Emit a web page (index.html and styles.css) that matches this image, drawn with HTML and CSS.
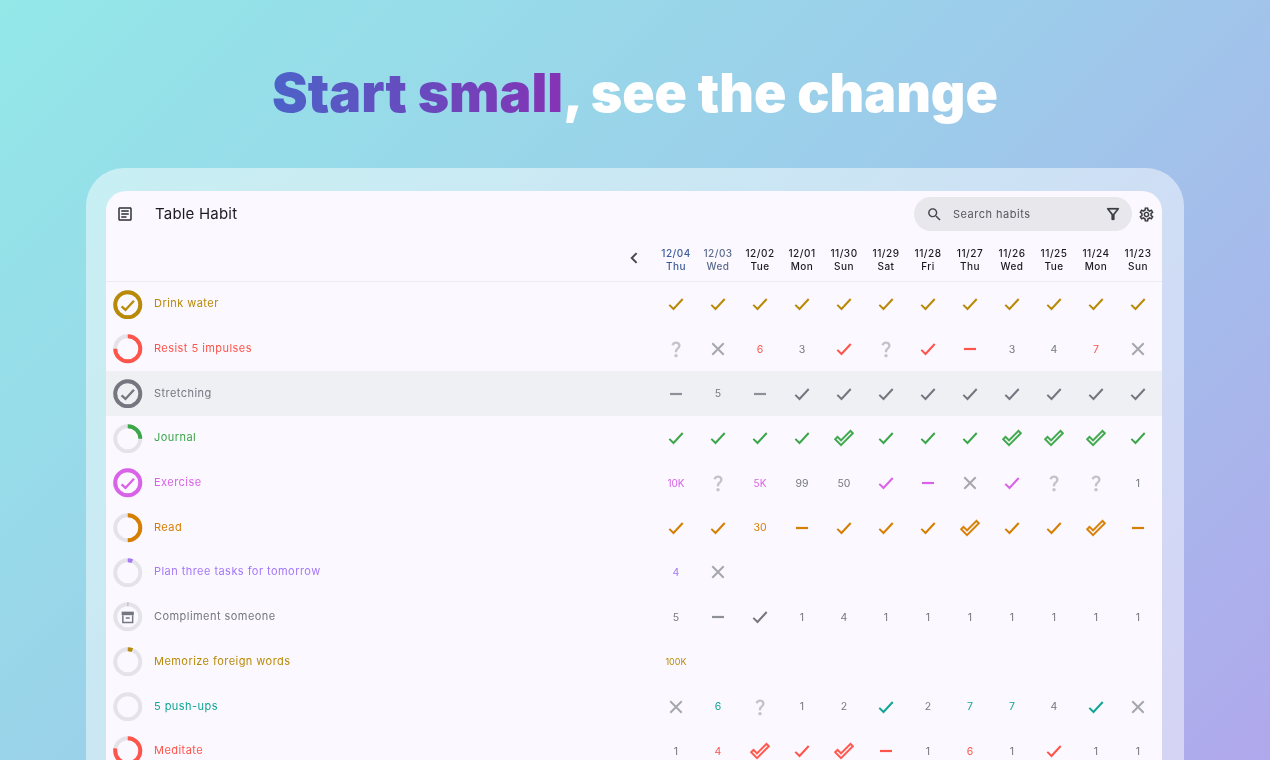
FILE: index.html
```html
<!DOCTYPE html>
<html lang="en">
<head>
    <meta charset="UTF-8">
    <meta name="viewport" content="width=device-width, initial-scale=1.0">
    <title>Table Habit</title>
    <link rel="stylesheet" href="styles.css">
</head>
<body>
    <svg class="defs" aria-hidden="true">
        <symbol id="check" viewBox="0 0 24 24"><path d="M5.300 12.900l4.200 4.100 9.200-10" fill="none" stroke="currentColor" stroke-width="2"/></symbol>
        <symbol id="dbl" viewBox="0 0 24 24"><path d="M19.770 4.930l1.400 1.400L8.430 19.070l-5.600-5.600 1.400-1.400 4.200 4.200L19.770 4.930m0-2.830L8.430 13.440l-4.200-4.200L0 13.470l8.430 8.430L24 6.330 19.770 2.100z" fill="currentColor" stroke="currentColor" stroke-width="0.500"/></symbol>
        <symbol id="dash" viewBox="0 0 24 24"><path d="M6 12h12" fill="none" stroke="currentColor" stroke-width="2.200"/></symbol>
        <symbol id="cross" viewBox="0 0 24 24"><path d="M6.300 6.300l11.400 11.400M17.700 6.300L6.300 17.700" fill="none" stroke="currentColor" stroke-width="2"/></symbol>
        <symbol id="ask" viewBox="0 0 24 24"><path d="M11.070 12.850c.77-1.390 2.250-2.210 3.110-3.440.91-1.290.4-3.700-2.180-3.700-1.690 0-2.520 1.280-2.870 2.340L6.540 6.960C7.250 4.830 9.180 3 11.990 3c2.350 0 3.960 1.070 4.780 2.410.7 1.150 1.110 3.300.03 4.900-1.200 1.770-2.350 2.310-2.970 3.450-.25.46-.35.76-.35 2.240h-2.890c-.01-.78-.13-2.050.48-3.150zM14 20c0 1.100-.9 2-2 2s-2-.9-2-2 .9-2 2-2 2 .9 2 2z" fill="currentColor"/></symbol>
        <symbol id="ring" viewBox="0 0 30 30"><circle cx="15" cy="15" r="12.750" fill="none" stroke="#e4e4e8" stroke-width="4"/></symbol>
    </svg>

    <h1 class="headline"><span class="accent">Start small</span>, see the change</h1>

    <div class="frame">
        <div class="app">
            <div class="topbar">
                <svg class="icon-notes" viewBox="0 0 24 24"><path d="M19 5v14H5V5h14m0-2H5c-1.100 0-2 .9-2 2v14c0 1.100.9 2 2 2h14c1.100 0 2-.9 2-2V5c0-1.100-.9-2-2-2zM14 17H7v-2h7v2zm3-4H7v-2h10v2zm0-4H7V7h10v2z"/></svg>
                <div class="title">Table Habit</div>
                <div class="search">
                    <svg class="icon-search" viewBox="0 0 24 24"><path d="M15.500 14h-.79l-.28-.27C15.410 12.590 16 11.110 16 9.500 16 5.910 13.090 3 9.500 3S3 5.910 3 9.500 5.910 16 9.500 16c1.610 0 3.090-.59 4.230-1.570l.27.28v.79l5 4.990L20.490 19l-4.990-5zm-6 0C7.010 14 5 11.990 5 9.500S7.010 5 9.500 5 14 7.010 14 9.500 11.990 14 9.500 14z"/></svg>
                    <span class="search-text">Search habits</span>
                    <svg class="icon-filter" viewBox="0 0 24 24"><path d="M7 6h10l-5.010 6.300L7 6zm-2.750-.39C6.270 8.200 10 13 10 13v6c0 .55.45 1 1 1h2c.55 0 1-.45 1-1v-6s3.720-4.800 5.740-7.390c.51-.66.04-1.610-.79-1.610H5.040c-.83 0-1.300.95-.79 1.610z"/></svg>
                </div>
                <svg class="icon-gear" viewBox="0 0 24 24"><path d="M19.430 12.980c.04-.32.07-.64.07-.98 0-.34-.03-.66-.07-.98l2.110-1.650c.19-.15.24-.42.12-.64l-2-3.460c-.09-.16-.26-.25-.44-.25-.06 0-.12.01-.17.03l-2.490 1c-.52-.4-1.080-.73-1.690-.98l-.38-2.650C14.460 2.180 14.250 2 14 2h-4c-.25 0-.46.18-.49.42l-.38 2.650c-.61.25-1.170.59-1.690.98l-2.490-1c-.06-.02-.12-.03-.18-.03-.17 0-.34.09-.43.25l-2 3.460c-.13.22-.07.49.12.64l2.110 1.650c-.04.32-.07.65-.07.98 0 .33.03.66.07.98l-2.110 1.650c-.19.15-.24.42-.12.64l2 3.460c.09.16.26.25.44.25.06 0 .12-.01.17-.03l2.490-1c.52.4 1.080.73 1.690.98l.38 2.650c.03.24.24.42.49.42h4c.25 0 .46-.18.49-.42l.38-2.650c.61-.25 1.170-.59 1.690-.98l2.490 1c.06.02.12.03.18.03.17 0 .34-.09.43-.25l2-3.460c.12-.22.07-.49-.12-.64l-2.110-1.650zm-1.980-1.710c.04.31.05.52.05.73 0 .21-.02.43-.05.73l-.14 1.130.89.7 1.080.84-.7 1.210-1.270-.51-1.040-.42-.9.68c-.43.32-.84.56-1.250.73l-1.060.43-.16 1.130-.2 1.350h-1.400l-.19-1.350-.16-1.130-1.060-.43c-.43-.18-.83-.41-1.230-.71l-.91-.7-1.060.43-1.270.51-.7-1.210 1.080-.84.89-.7-.14-1.130c-.03-.31-.05-.54-.05-.74s.02-.43.05-.73l.14-1.130-.89-.7-1.080-.84.7-1.210 1.270.51 1.040.42.9-.68c.43-.32.84-.56 1.250-.73l1.060-.43.16-1.130.2-1.350h1.390l.19 1.350.16 1.130 1.060.43c.43.18.83.41 1.230.71l.91.7 1.060-.43 1.270-.51.7 1.210-1.070.85-.89.7.14 1.130zM12 8c-2.210 0-4 1.790-4 4s1.790 4 4 4 4-1.790 4-4-1.790-4-4-4zm0 6c-1.100 0-2-.9-2-2s.9-2 2-2 2 .9 2 2-.9 2-2 2z"/></svg>
            </div>

            <div class="dates">
                <div class="prev"><svg class="icon-prev" viewBox="0 0 24 24"><path d="M15.500 5.500L9 12l6.500 6.500" fill="none" stroke="currentColor" stroke-width="2.600"/></svg></div>
                <div class="date today"><span>12/04</span><span>Thu</span></div>
                <div class="date past"><span>12/03</span><span>Wed</span></div>
                <div class="date"><span>12/02</span><span>Tue</span></div>
                <div class="date"><span>12/01</span><span>Mon</span></div>
                <div class="date"><span>11/30</span><span>Sun</span></div>
                <div class="date"><span>11/29</span><span>Sat</span></div>
                <div class="date"><span>11/28</span><span>Fri</span></div>
                <div class="date"><span>11/27</span><span>Thu</span></div>
                <div class="date"><span>11/26</span><span>Wed</span></div>
                <div class="date"><span>11/25</span><span>Tue</span></div>
                <div class="date"><span>11/24</span><span>Mon</span></div>
                <div class="date"><span>11/23</span><span>Sun</span></div>
            </div>

            <div class="row gold">
                <div class="habit">
                    <svg class="ring" viewBox="0 0 30 30"><use href="#ring"/><circle class="arc" cx="15" cy="15" r="12.750" pathLength="100" stroke-dasharray="100 100"/><path class="tick" d="M8.700 16.700l4 3.600 8.600-9.300"/></svg>
                    <span class="name">Drink water</span>
                </div>
                <span class="cell"><svg><use href="#check"/></svg></span>
                <span class="cell"><svg><use href="#check"/></svg></span>
                <span class="cell"><svg><use href="#check"/></svg></span>
                <span class="cell"><svg><use href="#check"/></svg></span>
                <span class="cell"><svg><use href="#check"/></svg></span>
                <span class="cell"><svg><use href="#check"/></svg></span>
                <span class="cell"><svg><use href="#check"/></svg></span>
                <span class="cell"><svg><use href="#check"/></svg></span>
                <span class="cell"><svg><use href="#check"/></svg></span>
                <span class="cell"><svg><use href="#check"/></svg></span>
                <span class="cell"><svg><use href="#check"/></svg></span>
                <span class="cell"><svg><use href="#check"/></svg></span>
            </div>

            <div class="row red">
                <div class="habit">
                    <svg class="ring" viewBox="0 0 30 30"><use href="#ring"/><circle class="arc" cx="15" cy="15" r="12.750" pathLength="100" stroke-dasharray="75 100"/></svg>
                    <span class="name">Resist 5 impulses</span>
                </div>
                <span class="cell ask"><svg><use href="#ask"/></svg></span>
                <span class="cell off"><svg><use href="#cross"/></svg></span>
                <span class="cell on">6</span>
                <span class="cell num">3</span>
                <span class="cell"><svg><use href="#check"/></svg></span>
                <span class="cell ask"><svg><use href="#ask"/></svg></span>
                <span class="cell"><svg><use href="#check"/></svg></span>
                <span class="cell"><svg><use href="#dash"/></svg></span>
                <span class="cell num">3</span>
                <span class="cell num">4</span>
                <span class="cell on">7</span>
                <span class="cell off"><svg><use href="#cross"/></svg></span>
            </div>

            <div class="row gray selected">
                <div class="habit">
                    <svg class="ring" viewBox="0 0 30 30"><use href="#ring"/><circle class="arc" cx="15" cy="15" r="12.750" pathLength="100" stroke-dasharray="100 100"/><path class="tick" d="M8.700 16.700l4 3.600 8.600-9.300"/></svg>
                    <span class="name">Stretching</span>
                </div>
                <span class="cell off-dash"><svg><use href="#dash"/></svg></span>
                <span class="cell num">5</span>
                <span class="cell off-dash"><svg><use href="#dash"/></svg></span>
                <span class="cell"><svg><use href="#check"/></svg></span>
                <span class="cell"><svg><use href="#check"/></svg></span>
                <span class="cell"><svg><use href="#check"/></svg></span>
                <span class="cell"><svg><use href="#check"/></svg></span>
                <span class="cell"><svg><use href="#check"/></svg></span>
                <span class="cell"><svg><use href="#check"/></svg></span>
                <span class="cell"><svg><use href="#check"/></svg></span>
                <span class="cell"><svg><use href="#check"/></svg></span>
                <span class="cell"><svg><use href="#check"/></svg></span>
            </div>

            <div class="row green">
                <div class="habit">
                    <svg class="ring" viewBox="0 0 30 30"><use href="#ring"/><circle class="arc" cx="15" cy="15" r="12.750" pathLength="100" stroke-dasharray="25 100"/></svg>
                    <span class="name">Journal</span>
                </div>
                <span class="cell"><svg><use href="#check"/></svg></span>
                <span class="cell"><svg><use href="#check"/></svg></span>
                <span class="cell"><svg><use href="#check"/></svg></span>
                <span class="cell"><svg><use href="#check"/></svg></span>
                <span class="cell double"><svg><use href="#dbl"/></svg></span>
                <span class="cell"><svg><use href="#check"/></svg></span>
                <span class="cell"><svg><use href="#check"/></svg></span>
                <span class="cell"><svg><use href="#check"/></svg></span>
                <span class="cell double"><svg><use href="#dbl"/></svg></span>
                <span class="cell double"><svg><use href="#dbl"/></svg></span>
                <span class="cell double"><svg><use href="#dbl"/></svg></span>
                <span class="cell"><svg><use href="#check"/></svg></span>
            </div>

            <div class="row pink">
                <div class="habit">
                    <svg class="ring" viewBox="0 0 30 30"><use href="#ring"/><circle class="arc" cx="15" cy="15" r="12.750" pathLength="100" stroke-dasharray="100 100"/><path class="tick" d="M8.700 16.700l4 3.600 8.600-9.300"/></svg>
                    <span class="name">Exercise</span>
                </div>
                <span class="cell on small">10K</span>
                <span class="cell ask"><svg><use href="#ask"/></svg></span>
                <span class="cell on small">5K</span>
                <span class="cell num">99</span>
                <span class="cell num">50</span>
                <span class="cell"><svg><use href="#check"/></svg></span>
                <span class="cell"><svg><use href="#dash"/></svg></span>
                <span class="cell off"><svg><use href="#cross"/></svg></span>
                <span class="cell"><svg><use href="#check"/></svg></span>
                <span class="cell ask"><svg><use href="#ask"/></svg></span>
                <span class="cell ask"><svg><use href="#ask"/></svg></span>
                <span class="cell num">1</span>
            </div>

            <div class="row orange">
                <div class="habit">
                    <svg class="ring" viewBox="0 0 30 30"><use href="#ring"/><circle class="arc" cx="15" cy="15" r="12.750" pathLength="100" stroke-dasharray="50 100"/></svg>
                    <span class="name">Read</span>
                </div>
                <span class="cell"><svg><use href="#check"/></svg></span>
                <span class="cell"><svg><use href="#check"/></svg></span>
                <span class="cell on">30</span>
                <span class="cell"><svg><use href="#dash"/></svg></span>
                <span class="cell"><svg><use href="#check"/></svg></span>
                <span class="cell"><svg><use href="#check"/></svg></span>
                <span class="cell"><svg><use href="#check"/></svg></span>
                <span class="cell double"><svg><use href="#dbl"/></svg></span>
                <span class="cell"><svg><use href="#check"/></svg></span>
                <span class="cell"><svg><use href="#check"/></svg></span>
                <span class="cell double"><svg><use href="#dbl"/></svg></span>
                <span class="cell"><svg><use href="#dash"/></svg></span>
            </div>

            <div class="row purple">
                <div class="habit">
                    <svg class="ring" viewBox="0 0 30 30"><use href="#ring"/><circle class="arc" cx="15" cy="15" r="12.750" pathLength="100" stroke-dasharray="6 100"/></svg>
                    <span class="name">Plan three tasks for tomorrow</span>
                </div>
                <span class="cell on">4</span>
                <span class="cell off"><svg><use href="#cross"/></svg></span>
            </div>

            <div class="row gray">
                <div class="habit">
                    <svg class="ring" viewBox="0 0 30 30"><use href="#ring"/><circle class="arc" cx="15" cy="15" r="12.750" pathLength="100" stroke-dasharray="0.600 100"/><path class="lid" d="M8.800 9.800h12.400v3.600H8.800z"/><path class="box" d="M10 13.400v7.400h10v-7.400M13 16.300h4"/></svg>
                    <span class="name">Compliment someone</span>
                </div>
                <span class="cell num">5</span>
                <span class="cell off-dash"><svg><use href="#dash"/></svg></span>
                <span class="cell"><svg><use href="#check"/></svg></span>
                <span class="cell num">1</span>
                <span class="cell num">4</span>
                <span class="cell num">1</span>
                <span class="cell num">1</span>
                <span class="cell num">1</span>
                <span class="cell num">1</span>
                <span class="cell num">1</span>
                <span class="cell num">1</span>
                <span class="cell num">1</span>
            </div>

            <div class="row gold">
                <div class="habit">
                    <svg class="ring" viewBox="0 0 30 30"><use href="#ring"/><circle class="arc" cx="15" cy="15" r="12.750" pathLength="100" stroke-dasharray="6 100"/></svg>
                    <span class="name">Memorize foreign words</span>
                </div>
                <span class="cell on tiny">100K</span>
            </div>

            <div class="row teal">
                <div class="habit">
                    <svg class="ring" viewBox="0 0 30 30"><use href="#ring"/></svg>
                    <span class="name">5 push-ups</span>
                </div>
                <span class="cell off"><svg><use href="#cross"/></svg></span>
                <span class="cell on">6</span>
                <span class="cell ask"><svg><use href="#ask"/></svg></span>
                <span class="cell num">1</span>
                <span class="cell num">2</span>
                <span class="cell"><svg><use href="#check"/></svg></span>
                <span class="cell num">2</span>
                <span class="cell on">7</span>
                <span class="cell on">7</span>
                <span class="cell num">4</span>
                <span class="cell"><svg><use href="#check"/></svg></span>
                <span class="cell off"><svg><use href="#cross"/></svg></span>
            </div>

            <div class="row red">
                <div class="habit">
                    <svg class="ring" viewBox="0 0 30 30"><use href="#ring"/><circle class="arc" cx="15" cy="15" r="12.750" pathLength="100" stroke-dasharray="78 100"/></svg>
                    <span class="name">Meditate</span>
                </div>
                <span class="cell num">1</span>
                <span class="cell on">4</span>
                <span class="cell double"><svg><use href="#dbl"/></svg></span>
                <span class="cell"><svg><use href="#check"/></svg></span>
                <span class="cell double"><svg><use href="#dbl"/></svg></span>
                <span class="cell"><svg><use href="#dash"/></svg></span>
                <span class="cell num">1</span>
                <span class="cell on">6</span>
                <span class="cell num">1</span>
                <span class="cell"><svg><use href="#check"/></svg></span>
                <span class="cell num">1</span>
                <span class="cell num">1</span>
            </div>
        </div>
    </div>
</body>
</html>
```

FILE: styles.css
```css
html, body {
    height: 760px;
    overflow: hidden;
}

body {
    margin: 0;
    font-family: Inter, "Noto Sans", sans-serif;
    background: linear-gradient(135deg, #93e8e8 0%, #9ccdea 50%, #b0a8ec 100%);
    color: #1b1b21;
}

.defs {
    display: none;
}

.headline {
    margin: 0;
    padding-top: 61px;
    height: 168px;
    box-sizing: border-box;
    font-size: 53.500px;
    line-height: 64px;
    font-weight: 900;
    text-align: center;
    color: #fff;
    white-space: nowrap;
}

.accent {
    background: linear-gradient(to right, #4c62c8, #8433b4);
    -webkit-background-clip: text;
    background-clip: text;
    color: transparent;
}

.frame {
    margin: 0 86px;
    padding: 23px 22px 0 20px;
    height: 600px;
    border-radius: 38px 38px 0 0;
    background: rgba(255, 255, 255, 0.48);
}

.app {
    height: 600px;
    background: #fbf8ff;
    border-radius: 20px 20px 0 0;
    overflow: hidden;
    will-change: transform;
}

.topbar {
    display: flex;
    align-items: center;
    height: 46px;
    padding: 0 7.500px 0 10px;
    box-sizing: border-box;
}

.icon-notes {
    width: 18px;
    height: 18px;
    margin-bottom: 1px;
    fill: #2e3036;
}

.title {
    flex: 1;
    margin-left: 21px;
    padding-bottom: 2px;
    font-size: 15px;
    letter-spacing: 0.2px;
}

.search {
    display: flex;
    align-items: center;
    width: 218px;
    height: 34px;
    padding: 0 10px 0 12px;
    box-sizing: border-box;
    background: #e8e7ec;
    border-radius: 17px;
}

.icon-search {
    width: 17px;
    height: 17px;
    fill: #45464e;
}

.search-text {
    flex: 1;
    margin-left: 10px;
    font-size: 11px;
    letter-spacing: 0.5px;
    color: #55565e;
}

.icon-filter {
    width: 18px;
    height: 18px;
    fill: #3b3c44;
    stroke: #3b3c44;
    stroke-width: 0.3;
}

.icon-gear {
    width: 17px;
    height: 17px;
    margin-left: 5.500px;
    fill: #3b3c44;
    stroke: #3b3c44;
    stroke-width: 0.2;
}

.dates {
    display: flex;
    height: 45px;
    padding: 0 3px 0 0;
    border-bottom: 1px solid #ecebf0;
    box-sizing: border-box;
}

.prev {
    flex: 1;
    display: flex;
    justify-content: flex-end;
    align-items: flex-start;
    padding: 12px 12px 0 0;
}

.icon-prev {
    width: 18px;
    height: 18px;
    color: #45464e;
}

.date {
    width: 42px;
    display: flex;
    flex-direction: column;
    align-items: center;
    padding-top: 10px;
    font-size: 10px;
    line-height: 13px;
    font-weight: 500;
    letter-spacing: 0.5px;
    color: #1b1b21;
}

.date.today {
    color: #3e5c9a;
}

.date.past {
    color: #5d6b8c;
}

.row {
    display: flex;
    align-items: center;
    height: 44.700px;
    padding: 0 3px 0 7px;
    color: var(--c);
}

.row.selected {
    background: #eff0f4;
}

.gold { --c: #b98a08; }
.red { --c: #ff5449; }
.gray { --c: #74777f; }
.green { --c: #3ba748; }
.pink { --c: #da62e8; }
.orange { --c: #d67e00; }
.purple { --c: #a478f7; }
.teal { --c: #10a595; }

.habit {
    flex: none;
    width: 542px;
    display: flex;
    align-items: center;
}

.ring {
    width: 29.500px;
    height: 29.500px;
    flex: none;
}

.arc {
    fill: none;
    stroke: var(--c);
    stroke-width: 4;
    transform: rotate(-90deg);
    transform-origin: 15px 15px;
}

.tick {
    fill: none;
    stroke: var(--c);
    stroke-width: 2.400;
}

.lid {
    fill: var(--c);
}

.box {
    fill: none;
    stroke: var(--c);
    stroke-width: 1.500;
}

.name {
    margin-left: 11.500px;
    padding-bottom: 2px;
    font-size: 11px;
    letter-spacing: 0.45px;
    white-space: nowrap;
}

.cell {
    width: 42px;
    height: 24px;
    flex: none;
    display: flex;
    align-items: center;
    justify-content: center;
    font-size: 10.500px;
}

.cell svg {
    width: 24px;
    height: 24px;
    display: block;
}

.cell.double svg,
.cell.ask svg {
    width: 20px;
    height: 20px;
}

.cell.num {
    color: #74777f;
}

.cell.off {
    color: #a5a7ad;
}

.cell.off-dash {
    color: #8e9097;
}

.cell.ask {
    color: #c3c4ca;
}

.cell.small {
    font-size: 10px;
}

.cell.tiny {
    font-size: 9px;
}
```
